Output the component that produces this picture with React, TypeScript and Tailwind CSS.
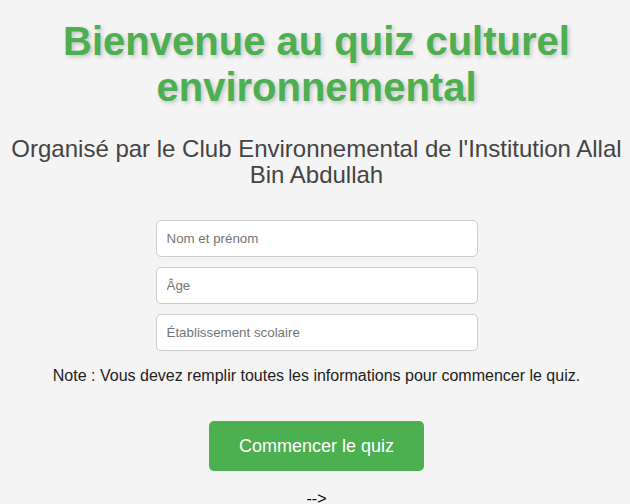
import React from "react";

export default function App() {
  return (
    <div className="min-h-[504px] w-full bg-[#f4f4f4] font-['Liberation_Sans',Arial,sans-serif] text-[#333] flex flex-col items-center text-center pt-[18px] pl-[3px]">
      <h1 className="text-[40px] leading-[46px] font-bold text-[#4caf50] [text-shadow:2px_2px_4px_rgba(0,0,0,0.2)]">
        Bienvenue au quiz culturel
        <br />
        environnemental
      </h1>
      <h2 className="mt-[26px] text-[24px] leading-[26px] font-normal text-[#444]">
        Organisé par le Club Environnemental de l'Institution Allal Bin Abdullah
      </h2>
      <div className="mt-[32px] flex flex-col items-center gap-[10px]">
        <input
          type="text"
          placeholder="Nom et prénom"
          className="w-[322px] h-[37px] px-[10px] text-[13.33px] bg-white border border-[#ccc] rounded-[5px] placeholder:text-[#757575] outline-none"
        />
        <input
          type="text"
          placeholder="Âge"
          className="w-[322px] h-[37px] px-[10px] text-[13.33px] bg-white border border-[#ccc] rounded-[5px] placeholder:text-[#757575] outline-none"
        />
        <input
          type="text"
          placeholder="Établissement scolaire"
          className="w-[322px] h-[37px] px-[10px] text-[13.33px] bg-white border border-[#ccc] rounded-[5px] placeholder:text-[#757575] outline-none"
        />
      </div>
      <p className="mt-[16px] text-[16px] leading-[18px] text-[#222]">
        Note : Vous devez remplir toutes les informations pour commencer le quiz.
      </p>
      <button className="mt-[36px] w-[215px] h-[50px] bg-[#4caf50] text-white text-[18px] rounded-[5px]">
        Commencer le quiz
      </button>
      <div className="mt-[19px] text-[16px] leading-[18px] text-black">--&gt;</div>
    </div>
  );
}
